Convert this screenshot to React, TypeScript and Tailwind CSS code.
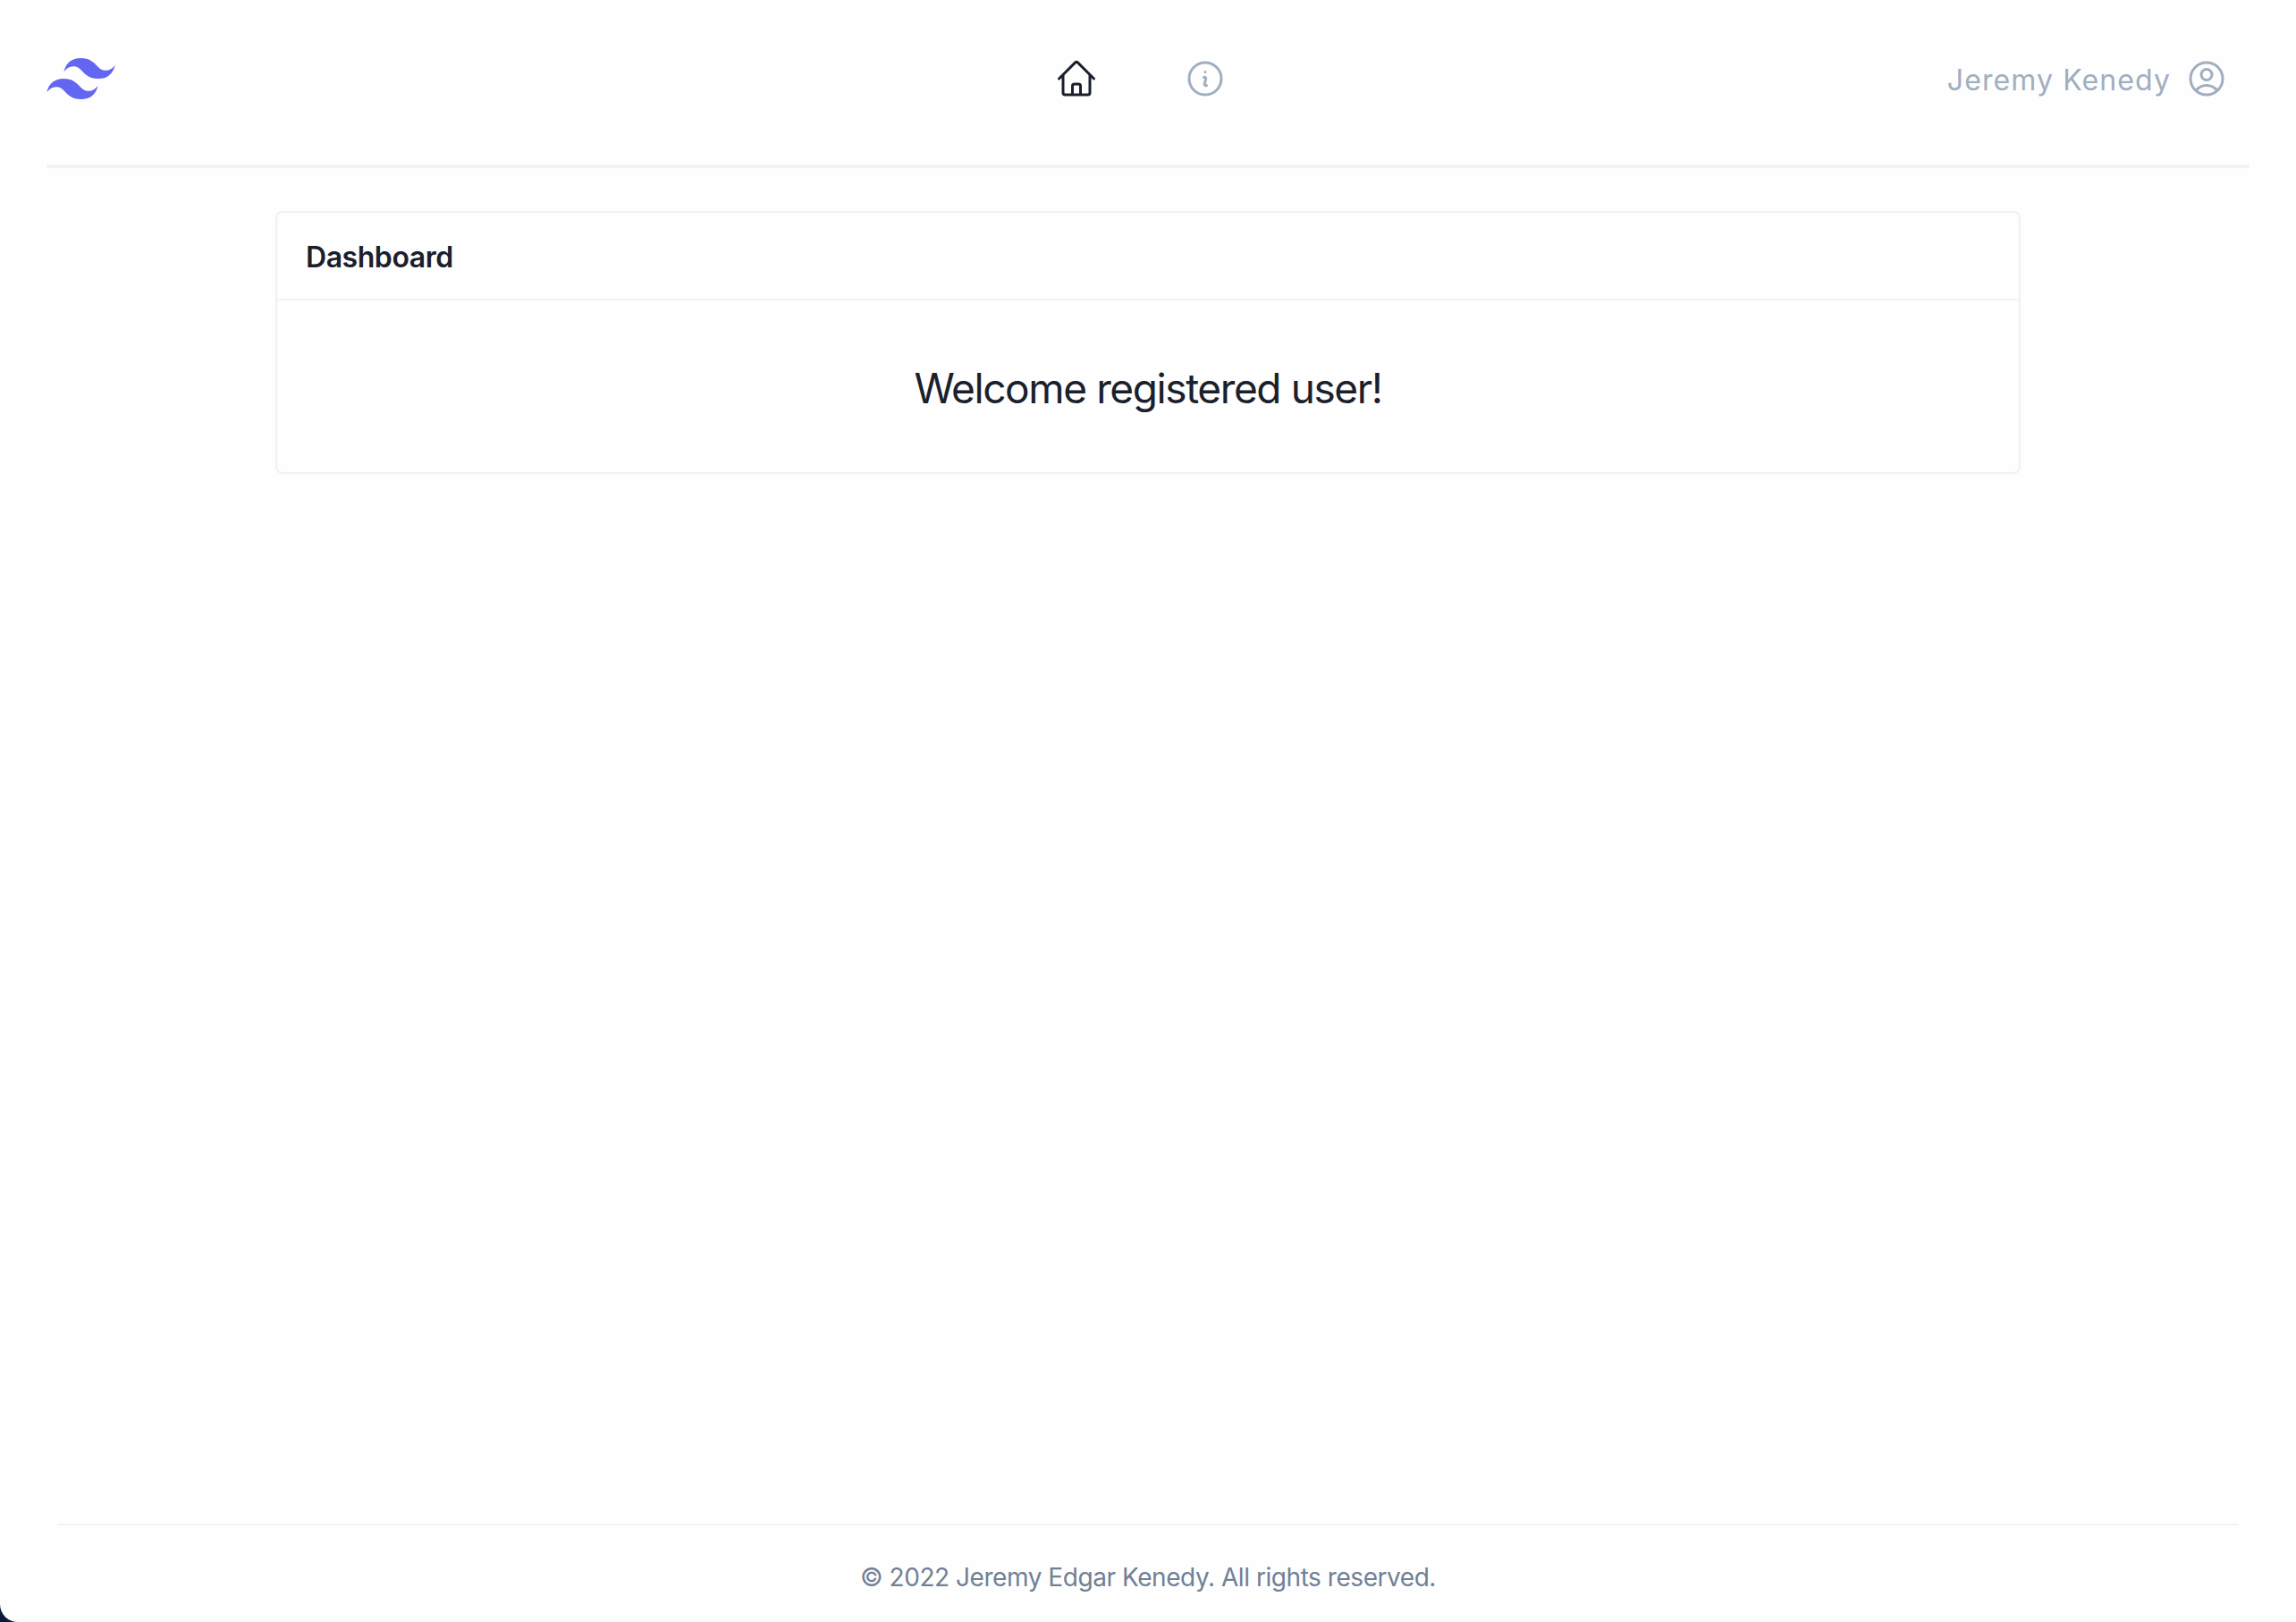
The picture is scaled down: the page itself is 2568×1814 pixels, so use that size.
export default function App() {
  return (
    <div className="h-[1814px] bg-[#0a1a3a] font-['Inter',sans-serif]">
      <div className="flex h-full flex-col rounded-bl-[20px] bg-[#fefefe]">
        <header className="mx-[52px] box-border flex h-[188px] items-center border-b-4 border-[#f0f2f5] pb-[8px]">
          <div className="flex flex-1 items-center">
            <svg viewBox="0 4.8 24 14.4" className="h-[46px] w-[77px]" fill="#6366f1">
              <path d="M12.001,4.8c-3.2,0-5.2,1.6-6,4.8c1.2-1.6,2.6-2.2,4.2-1.8c0.913,0.228,1.565,0.89,2.288,1.624 C13.666,10.618,15.027,12,18.001,12c3.2,0,5.2-1.6,6-4.8c-1.2,1.6-2.6,2.2-4.2,1.8c-0.913-0.228-1.565-0.89-2.288-1.624 C16.337,6.182,14.976,4.8,12.001,4.8z M6.001,12c-3.2,0-5.2,1.6-6,4.8c1.2-1.6,2.6-2.2,4.2-1.8c0.913,0.228,1.565,0.89,2.288,1.624 c1.177,1.194,2.538,2.576,5.512,2.576c3.2,0,5.2-1.6,6-4.8c-1.2,1.6-2.6,2.2-4.2,1.8c-0.913-0.228-1.565-0.89-2.288-1.624 C10.337,13.382,8.976,12,6.001,12z" />
            </svg>
          </div>
          <nav className="flex items-center gap-[96px] pl-[8px]">
            <svg viewBox="0 0 24 24" className="h-12 w-12" fill="none" stroke="#1a202c" strokeWidth={1.5} strokeLinecap="round" strokeLinejoin="round">
              <path d="m2.25 12 8.954-8.955c.44-.439 1.152-.439 1.591 0L21.75 12M4.5 9.75v10.125c0 .621.504 1.125 1.125 1.125H9.75v-4.875c0-.621.504-1.125 1.125-1.125h2.25c.621 0 1.125.504 1.125 1.125V21h4.125c.621 0 1.125-.504 1.125-1.125V9.75M8.25 21h8.25" />
            </svg>
            <svg viewBox="0 0 24 24" className="h-12 w-12" fill="none" stroke="#a0aec0" strokeWidth={1.5} strokeLinecap="round" strokeLinejoin="round">
              <path d="m11.25 11.25.041-.02a.75.75 0 0 1 1.063.852l-.708 2.836a.75.75 0 0 0 1.063.853l.041-.021M21 12a9 9 0 1 1-18 0 9 9 0 0 1 18 0Zm-9-3.75h.008v.008H12V8.25Z" />
            </svg>
          </nav>
          <div className="flex flex-1 items-center justify-end gap-[16px] pr-[24px]">
            <span className="pt-[3px] text-[32px] leading-[48px] tracking-[1.1px] text-[#a0aec0]">Jeremy Kenedy</span>
            <svg viewBox="0 0 24 24" className="h-12 w-12" fill="none" stroke="#a0aec0" strokeWidth={1.5} strokeLinecap="round" strokeLinejoin="round">
              <path d="M17.982 18.725A7.488 7.488 0 0 0 12 15.75a7.488 7.488 0 0 0-5.982 2.975m11.964 0a9 9 0 1 0-11.963 0m11.963 0A8.966 8.966 0 0 1 12 21a8.966 8.966 0 0 1-5.982-2.275M15 9.75a3 3 0 1 1-6 0 3 3 0 0 1 6 0Z" />
            </svg>
          </div>
        </header>
        <main className="flex-1 pt-[48px]">
          <div className="mx-auto w-[1952px] rounded-lg border-2 border-[#edf2f7]">
            <div className="border-b-2 border-[#edf2f7] px-[32px] pt-[26px] pb-[22px] text-[32px] leading-[48px] font-semibold tracking-[-0.45px] text-[#1a202c]">Dashboard</div>
            <div className="pt-[50px] pb-[46px] text-center text-[46px] leading-[96px] tracking-[-1.4px] text-[#1a202c]">Welcome registered user!</div>
          </div>
        </main>
        <footer className="mx-[64px] box-border h-[110px] border-t-2 border-[#f3f3f3] pt-[38px] text-center text-[28px] leading-[40px] tracking-[-0.45px] text-[#718096]">
          © 2022 Jeremy Edgar Kenedy. All rights reserved.
        </footer>
      </div>
    </div>
  );
}
